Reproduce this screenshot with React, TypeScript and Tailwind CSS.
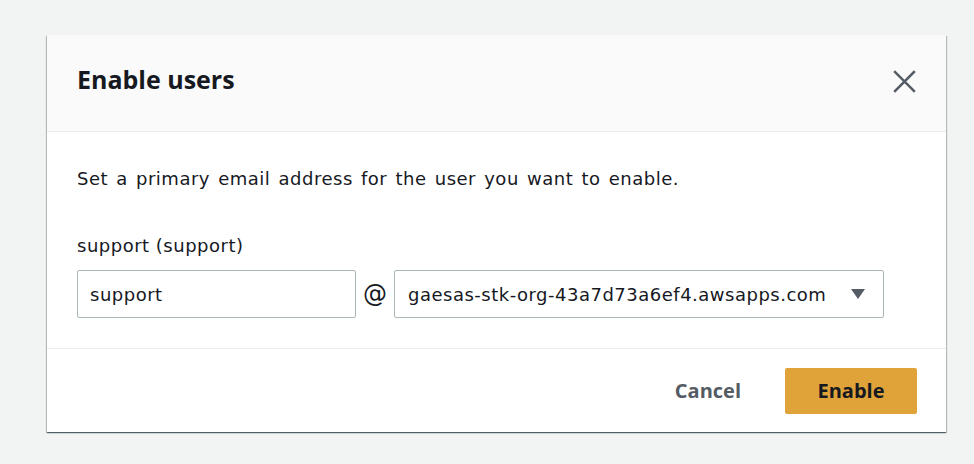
import React from "react";

const body = { fontFamily: '"DejaVu Sans", "Open Sans", sans-serif' };
const bold = { fontFamily: '"Open Sans", "Noto Sans", sans-serif' };

export default function App() {
  return (
    <div className="w-[974px] h-[464px] bg-[#f2f3f3] pt-[35px] pl-[47px]" style={bold}>
      <div className="w-[899px] bg-white shadow-[0_1px_1px_0_rgba(0,28,36,0.5),1px_1px_1px_0_rgba(0,28,36,0.2),-1px_1px_1px_0_rgba(0,28,36,0.2)]">
        <div className="h-[97px] bg-[#fafafa] border-b border-[#eaeded] flex items-center justify-between pl-[30px] pr-[30px]">
          <h2 className="text-[25px] font-bold text-[#16191f] leading-none mb-[7px]">Enable users</h2>
          <button className="w-[24px] h-[24px] flex items-center justify-center text-[#545b64] mb-[4px]">
            <svg width="23" height="23" viewBox="0 0 22 22" fill="none" stroke="currentColor" strokeWidth="2.4" strokeLinecap="square">
              <path d="M2 2 L20 20 M20 2 L2 20" />
            </svg>
          </button>
        </div>
        <div className="px-[30px] pt-[35px] pb-[30px] border-b border-[#eaeded] text-[18px] text-[#16191f] tracking-[0.5px]" style={body}>
          <p className="leading-[24px] [word-spacing:2px]">
            Set a primary email address for the user you want to enable.
          </p>
          <div className="mt-[43px] leading-[24px]">support (support)</div>
          <div className="mt-[12px] flex items-center">
            <div className="w-[279px] h-[48px] border border-[#aab7b8] rounded-[2px] flex items-center px-[12px]">
              support
            </div>
            <div className="w-[38px] text-center text-[24px] tracking-normal">@</div>
            <div className="w-[490px] h-[48px] border border-[#aab7b8] rounded-[2px] flex items-center justify-between pl-[13px] pr-[18px]">
              <span>gaesas-stk-org-43a7d73a6ef4.awsapps.com</span>
              <svg width="14" height="10" viewBox="0 0 14 10">
                <path d="M0 0 H14 L7 10 Z" fill="#545b64" />
              </svg>
            </div>
          </div>
        </div>
        <div className="h-[83px] flex items-center justify-end pr-[29px]">
          <button className="text-[20px] font-bold text-[#545b64] mr-[44px]">Cancel</button>
          <button className="w-[132px] h-[46px] bg-[#dfa33a] rounded-[2px] text-[20px] font-bold text-[#16191f]">
            Enable
          </button>
        </div>
      </div>
    </div>
  );
}
